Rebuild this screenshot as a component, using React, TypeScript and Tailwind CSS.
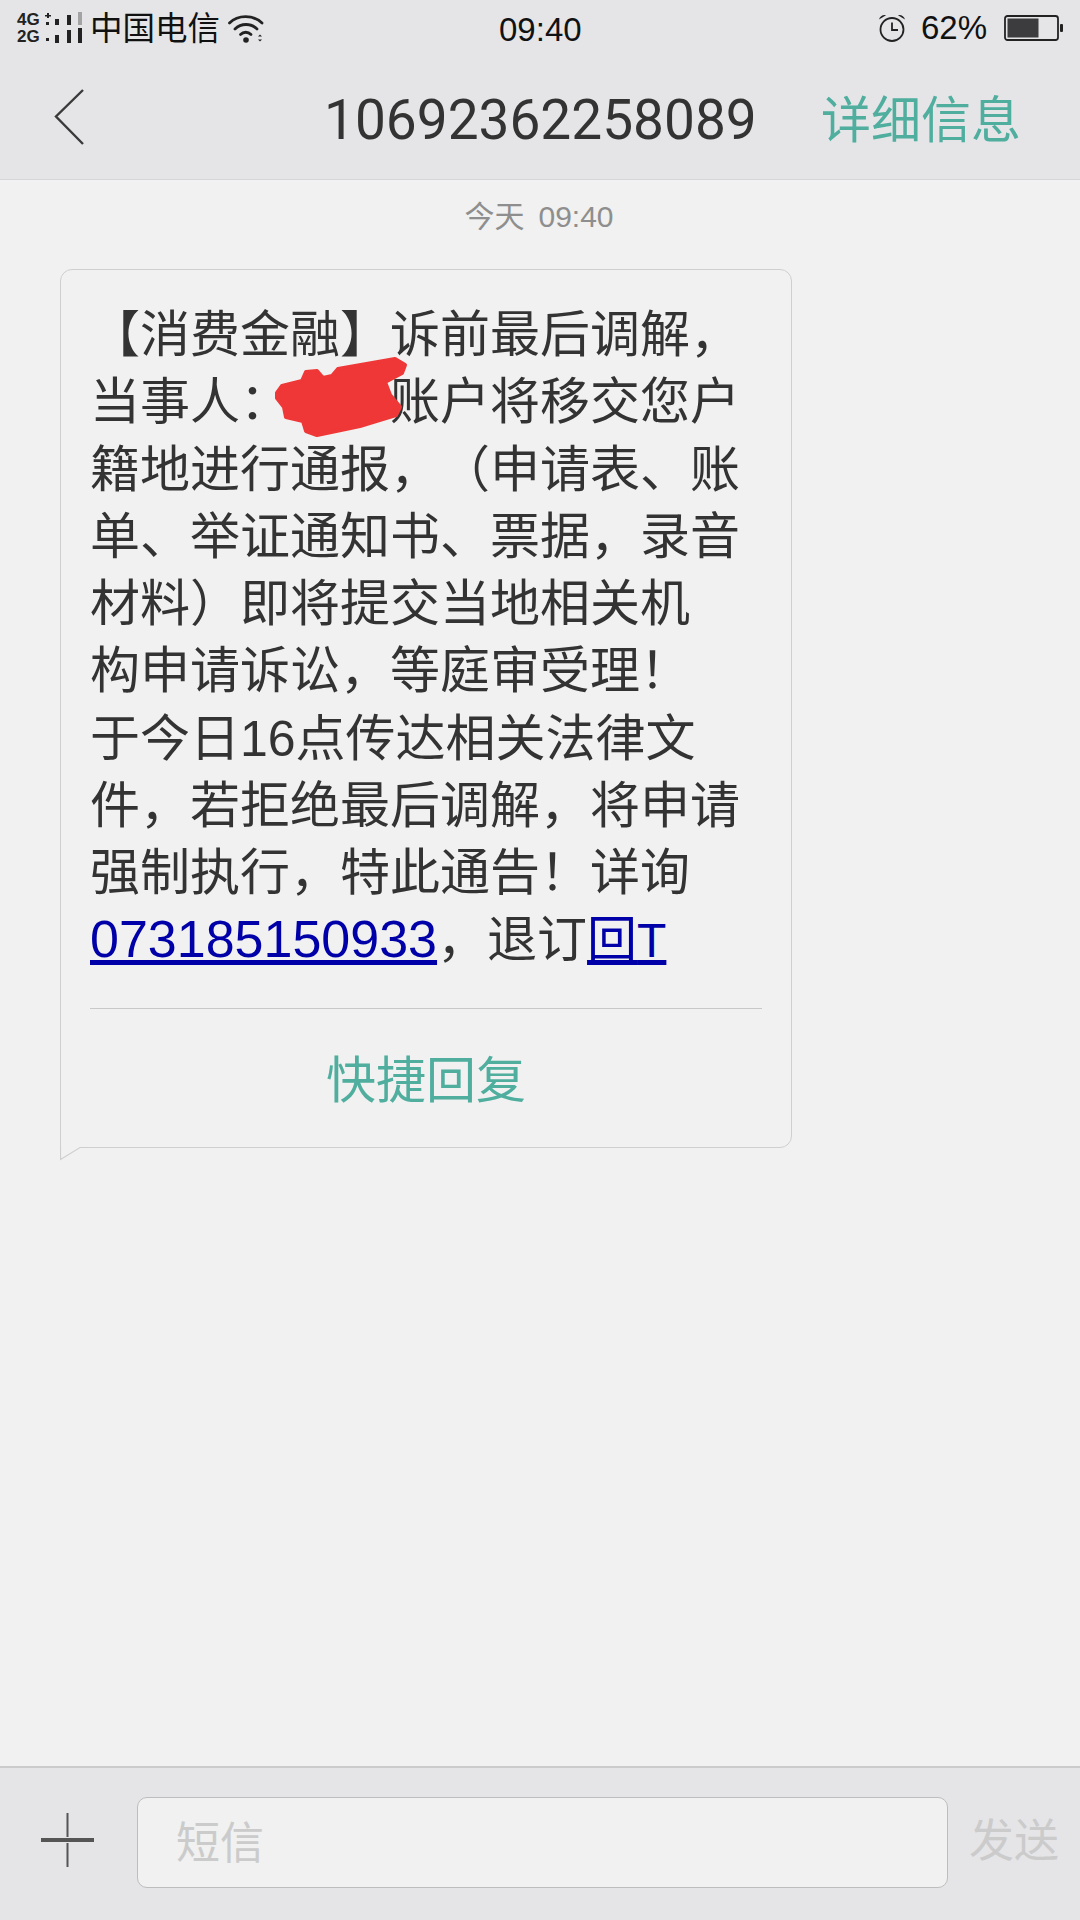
const lines = [
  '【消费金融】诉前最后调解，',
  null,
  '籍地进行通报，（申请表、账',
  '单、举证通知书、票据，录音',
  '材料）即将提交当地相关机',
  '构申请诉讼，等庭审受理！',
  '于今日16点传达相关法律文',
  '件，若拒绝最后调解，将申请',
  '强制执行，特此通告！详询',
];

function SignalIcon() {
  return (
    <div className="flex items-center w-[66px] h-[31px] relative">
      <div className="flex flex-col font-bold text-[#222] text-[17px] leading-[17px]">
        <span>4G</span>
        <span>2G</span>
      </div>
      {/* bars */}
      <svg className="absolute left-0 top-0" width="66" height="31" viewBox="17 12 66 31">
        <path d="M47 13h2v5h-2zM45 15h6v1.500h-6z" fill="#222" />
        <rect x="46" y="22" width="3" height="3" fill="#222" />
        <rect x="46" y="38" width="3" height="3" fill="#222" />
        <rect x="55" y="19" width="4" height="6" fill="#222" />
        <rect x="55" y="35" width="4" height="8" fill="#222" />
        <rect x="67" y="15" width="4" height="10" fill="#222" />
        <rect x="67" y="30" width="4" height="13" fill="#222" />
        <rect x="78" y="12" width="4" height="13" fill="#a3a3a3" />
        <rect x="78" y="28" width="4" height="15" fill="#222" />
      </svg>
    </div>
  );
}

function WifiIcon() {
  return (
    <svg width="36" height="30" viewBox="0 0 36 30" fill="none" stroke="#222" strokeLinecap="round">
      <path d="M1.500 10 C10 1.500 25 1.500 34 10" strokeWidth="2.800" />
      <path d="M7 16 C13 10 23 10 29 16" strokeWidth="2.800" />
      <path d="M12.500 21.500 C15.500 18.500 20 18.500 23 21.500" strokeWidth="2.800" />
      <circle cx="18" cy="27" r="2.800" fill="#222" stroke="none" />
      <path d="M30 23.500l2-2 2 2zM30 26.500l2 2 2-2z" fill="#222" stroke="none" />
    </svg>
  );
}

function AlarmIcon() {
  return (
    <svg width="28" height="28" viewBox="0 0 28 28" fill="none" stroke="#222">
      <circle cx="14" cy="15.500" r="11.500" strokeWidth="1.800" />
      <path d="M14 8.500v7.500h6" strokeWidth="1.800" />
      <path d="M1 5.500C2 2 5 .5 8 1.200zM27 5.500C26 2 23 .5 20 1.200z" fill="#222" stroke="none" />
    </svg>
  );
}

function BatteryIcon() {
  return (
    <svg width="60" height="26" viewBox="0 0 60 26" fill="none">
      <rect x="1" y="1" width="53" height="24" rx="2.500" stroke="#222" strokeWidth="1.800" />
      <rect x="3.500" y="3.500" width="31" height="19" fill="#3c3c3f" />
      <rect x="56" y="9" width="3" height="8" rx="1" fill="#222" />
    </svg>
  );
}

export default function App() {
  return (
    <div className="w-[1080px] h-[1920px] flex flex-col bg-[#f0f1f0] overflow-hidden text-[#333] font-['Liberation_Sans','Noto_Sans_CJK_SC',sans-serif]">
      {/* Status bar */}
      <div className="h-[55px] bg-[#e5e5e8] pl-[17px] pr-[16px] flex items-center text-[#111] relative">
        <SignalIcon />
        <span className="ml-[7px] mt-[4px] text-[32.5px] leading-none">中国电信</span>
        <div className="ml-[8px]"><WifiIcon /></div>
        <span className="ml-[235px] mt-[3px] text-[33px] leading-none">09:40</span>
        <div className="ml-auto flex items-center">
          <AlarmIcon />
          <span className="ml-[15px] text-[33px] leading-none">62%</span>
          <div className="ml-[17px]"><BatteryIcon /></div>
        </div>
      </div>

      {/* Title bar */}
      <div className="h-[125px] bg-[#e5e5e8] border-b border-[#d6d6da] flex items-center pt-[7px] pl-[54px] pr-[59px]">
        <svg className="-mt-[7px]" width="30" height="56" viewBox="0 0 30 56" fill="none" stroke="#3a3a3a" strokeWidth="2.400">
          <path d="M29 1 L2 27.500 L29 55" />
        </svg>
        <span className="ml-[240px] text-[55px] leading-none font-['Roboto','Noto_Sans_CJK_SC',sans-serif]">10692362258089</span>
        <span className="ml-auto text-[50px] leading-none text-[#4fae9e]">详细信息</span>
      </div>

      {/* Date */}
      <div className="h-[89px] pb-[16px] pr-[2px] flex items-center justify-center text-[30px] text-[#8e8e8e] gap-[14px]">
        <span>今天</span>
        <span>09:40</span>
      </div>

      {/* Message bubble */}
      <div className="relative ml-[60px] w-[732px] h-[879px] border border-[#cfcfcf] rounded-[12px] rounded-bl-none flex flex-col">
        <div className="pt-[32px] pl-[29px] text-[50px] leading-[67.3px] whitespace-nowrap [text-spacing-trim:space-all]">
          {lines.map((line, i) =>
            line ? (
              <div key={i}>{line}</div>
            ) : (
              <div key={i} className="flex">
                <span>当事人：</span>
                <span className="w-[100px]" />
                <span>账户将移交您户</span>
              </div>
            )
          )}
          <div className="h-[64px] -mt-[2px]">
            <span className="text-[#0000a8] underline text-[52px]">073185150933</span>
            <span>，退订</span>
            <span className="text-[#0000a8] underline">回<span className="text-[48px]">T</span></span>
          </div>
        </div>
        <div className="mt-[38px] mx-[29px] h-px bg-[#c8c8c8]" />
        <div className="flex-1 pt-[7px] flex items-center justify-center text-[50px] text-[#4fae9e]">快捷回复</div>

        {/* tail */}
        <svg className="absolute left-[-1px] top-[876px]" width="24" height="15" viewBox="0 0 24 15" fill="none">
          <path d="M0 0 V14 L20 2 H24 V0 Z" fill="#f0f1f0" />
          <path d="M0.500 0 V13.500 L20 1.500 H24" stroke="#cfcfcf" strokeWidth="1.200" />
        </svg>

        {/* red scribble over the name */}
        <svg className="absolute left-[209px] top-[80px]" width="145" height="95" viewBox="270 350 145 95" fill="#ef3737" stroke="#ef3737" strokeWidth="4" strokeLinejoin="round">
          <path d="M277 393 L282 386 L302 381 L306 372 L317 371 L323 378 L332 376 L338 369 L395 359 L405 365 L402 373 L385 382 L390 395 L400 407 L396 415 L373 422 L360 426 L317 435 L306 431 L303 421 L286 417 L284 407 L277 398 Z" />
        </svg>
      </div>

      <div className="flex-1" />

      {/* Input bar */}
      <div className="h-[154px] bg-[#e5e5e8] border-t-2 border-[#cbcbcb] flex items-center pl-[41px] relative">
        <svg width="54" height="54" viewBox="0 0 54 54" className="-mt-[8px]" fill="none" stroke="#555">
          <path d="M0 27h53" strokeWidth="4" />
          <path d="M26.500 0v24M26.500 30v24" strokeWidth="2" />
        </svg>
        <div className="ml-[42px] w-[811px] h-[91px] -mt-[3px] rounded-[10px] border border-[#bdbdbd] bg-[#f0f1f0] flex items-center pl-[38px] pt-[2px] text-[44px] text-[#cbcbcb]">
          短信
        </div>
        <span className="ml-[21px] -mt-[5px] text-[45px] leading-none text-[#cbcbcb]">发送</span>
      </div>
    </div>
  );
}
